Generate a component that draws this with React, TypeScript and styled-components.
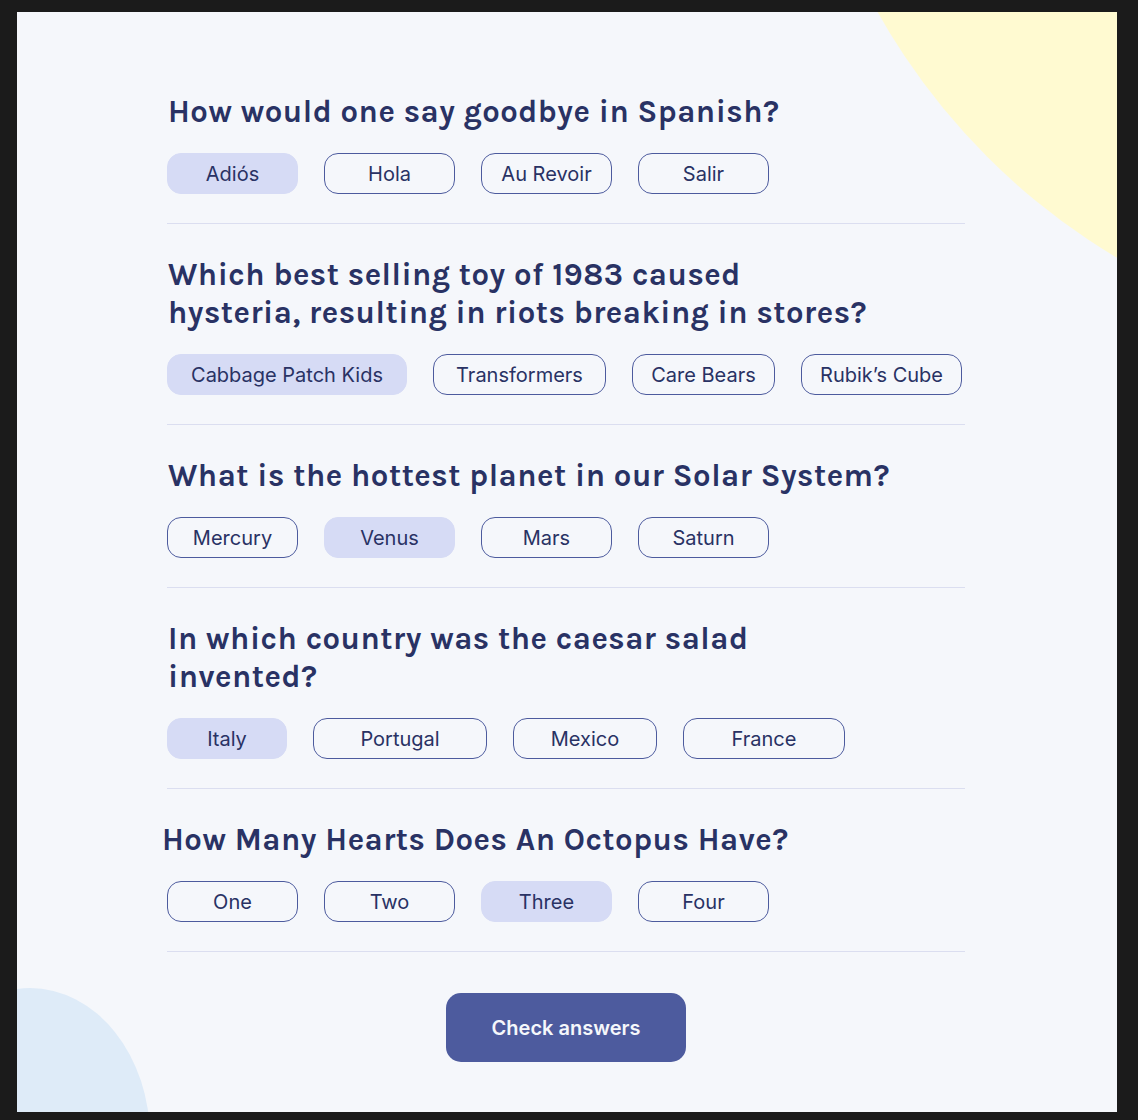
import styled, {createGlobalStyle} from 'styled-components';

type Question = {
	title: string;
	options: string[];
	selected: number;
	widths?: number[];
};

const questions: Question[] = [
	{
		title: 'How would one say goodbye in Spanish?',
		options: ['Adiós', 'Hola', 'Au Revoir', 'Salir'],
		selected: 0,
	},
	{
		title: 'Which best selling toy of 1983 caused\nhysteria, resulting in riots breaking in stores?',
		options: ['Cabbage Patch Kids', 'Transformers', 'Care Bears', 'Rubik’s Cube'],
		selected: 0,
		widths: [240, 173, 143, 161],
	},
	{
		title: 'What is the hottest planet in our Solar System?',
		options: ['Mercury', 'Venus', 'Mars', 'Saturn'],
		selected: 1,
	},
	{
		title: 'In which country was the caesar salad\ninvented?',
		options: ['Italy', 'Portugal', 'Mexico', 'France'],
		selected: 0,
		widths: [120, 174, 144, 162],
	},
	{
		title: 'How Many Hearts Does An Octopus Have?',
		options: ['One', 'Two', 'Three', 'Four'],
		selected: 2,
	},
];

const GlobalStyle = createGlobalStyle`
	html, body {
		margin: 0;
		padding: 0;
		background-color: #1b1b1b;
	}

	body {
		padding: 12px 0 0 17px;
		font-family: Inter, "Liberation Sans", sans-serif;
	}
`;

const Card = styled.div`
	position: relative;
	overflow: hidden;
	width: 1100px;
	height: 1100px;
	box-sizing: border-box;
	padding: 81px 0 0 150px;
	background-color: #f5f7fb;
`;

const YellowBlob = styled.div`
	position: absolute;
	left: 776px;
	top: -987px;
	width: 1326px;
	height: 1326px;
	border-radius: 50%;
	background-color: #fffad1;
`;

const BlueBlob = styled.div`
	position: absolute;
	left: -107px;
	top: 976px;
	width: 240px;
	height: 300px;
	border-radius: 50%;
	background-color: #deebf8;
`;

const Quiz = styled.main`
	position: relative;
	width: 798px;
	display: flex;
	flex-direction: column;
	gap: 32px;
`;

const Section = styled.section`
	display: flex;
	flex-direction: column;
	gap: 22px;
	padding-bottom: 29px;
	border-bottom: 1px solid #dbdef0;
`;

const Title = styled.h2<{$shift?: boolean}>`
	margin: 0 0 0 ${({$shift}) => ($shift ? '-5px' : '1px')};
	font-family: Karla, Inter, "Liberation Sans", sans-serif;
	font-size: 31px;
	font-weight: 700;
	line-height: 38px;
	letter-spacing: 0.5px;
	color: #293264;
	white-space: pre-line;
`;

const Options = styled.div`
	display: flex;
	flex-direction: row;
	gap: 26px;
`;

const Option = styled.button<{$selected: boolean; $width?: number}>`
	box-sizing: border-box;
	width: ${({$width}) => ($width ? `${$width}px` : '131px')};
	height: 41px;
	padding: 0;
	border: 1.5px solid ${({$selected}) => ($selected ? '#d6dbf5' : '#4d5b9e')};
	border-radius: 14px;
	background-color: ${({$selected}) => ($selected ? '#d6dbf5' : 'transparent')};
	color: #293264;
	font-family: Inter, "Liberation Sans", sans-serif;
	font-size: 20px;
	font-weight: 400;
	cursor: pointer;
`;

const Footer = styled.div`
	display: flex;
	justify-content: center;
	margin-top: 9px;
`;

const CheckButton = styled.button`
	width: 240px;
	height: 69px;
	border: none;
	border-radius: 15px;
	background-color: #4d5b9e;
	color: #f5f7fb;
	font-family: Inter, "Liberation Sans", sans-serif;
	font-size: 20px;
	font-weight: 600;
	cursor: pointer;
`;

export default function App() {
	return (
		<>
			<GlobalStyle />
			<Card>
				<YellowBlob />
				<BlueBlob />
				<Quiz>
					{questions.map((q, qi) => (
						<Section key={q.title}>
							<Title $shift={qi === questions.length - 1}>{q.title}</Title>
							<Options>
								{q.options.map((option, oi) => (
									<Option
										key={option}
										$selected={oi === q.selected}
										$width={q.widths?.[oi]}
									>
										{option}
									</Option>
								))}
							</Options>
						</Section>
					))}
					<Footer>
						<CheckButton>Check answers</CheckButton>
					</Footer>
				</Quiz>
			</Card>
		</>
	);
}
